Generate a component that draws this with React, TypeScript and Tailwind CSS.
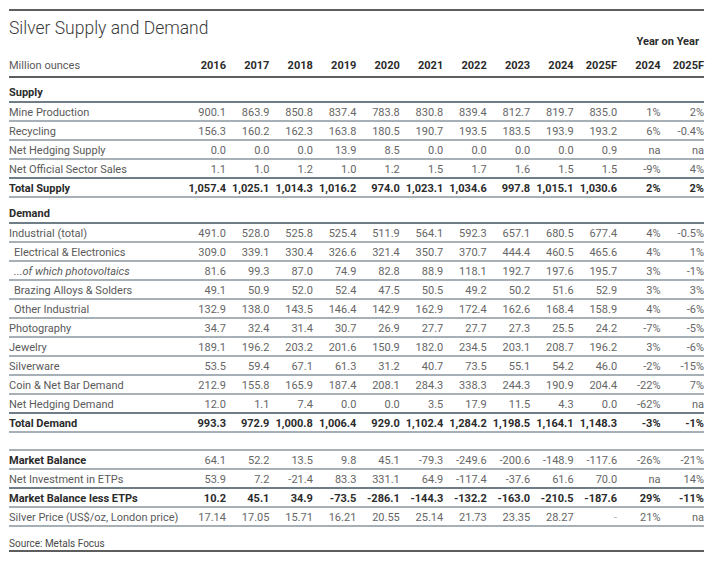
const years = ["2016", "2017", "2018", "2019", "2020", "2021", "2022", "2023", "2024", "2025F", "2024", "2025F"];

type Row = {
  label: string;
  values: string[];
  bold?: boolean;
  boldLabel?: boolean;
  indent?: boolean;
  italic?: boolean;
  dark?: boolean;
};

const supply: Row[] = [
  { label: "Mine Production", values: ["900.1", "863.9", "850.8", "837.4", "783.8", "830.8", "839.4", "812.7", "819.7", "835.0", "1%", "2%"] },
  { label: "Recycling", values: ["156.3", "160.2", "162.3", "163.8", "180.5", "190.7", "193.5", "183.5", "193.9", "193.2", "6%", "-0.4%"] },
  { label: "Net Hedging Supply", values: ["0.0", "0.0", "0.0", "13.9", "8.5", "0.0", "0.0", "0.0", "0.0", "0.9", "na", "na"] },
  { label: "Net Official Sector Sales", dark: true, values: ["1.1", "1.0", "1.2", "1.0", "1.2", "1.5", "1.7", "1.6", "1.5", "1.5", "-9%", "4%"] },
  { label: "Total Supply", bold: true, values: ["1,057.4", "1,025.1", "1,014.3", "1,016.2", "974.0", "1,023.1", "1,034.6", "997.8", "1,015.1", "1,030.6", "2%", "2%"] },
];

const demand: Row[] = [
  { label: "Industrial (total)", values: ["491.0", "528.0", "525.8", "525.4", "511.9", "564.1", "592.3", "657.1", "680.5", "677.4", "4%", "-0.5%"] },
  { label: "Electrical & Electronics", indent: true, values: ["309.0", "339.1", "330.4", "326.6", "321.4", "350.7", "370.7", "444.4", "460.5", "465.6", "4%", "1%"] },
  { label: "...of which photovoltaics", indent: true, italic: true, values: ["81.6", "99.3", "87.0", "74.9", "82.8", "88.9", "118.1", "192.7", "197.6", "195.7", "3%", "-1%"] },
  { label: "Brazing Alloys & Solders", indent: true, values: ["49.1", "50.9", "52.0", "52.4", "47.5", "50.5", "49.2", "50.2", "51.6", "52.9", "3%", "3%"] },
  { label: "Other Industrial", indent: true, values: ["132.9", "138.0", "143.5", "146.4", "142.9", "162.9", "172.4", "162.6", "168.4", "158.9", "4%", "-6%"] },
  { label: "Photography", values: ["34.7", "32.4", "31.4", "30.7", "26.9", "27.7", "27.7", "27.3", "25.5", "24.2", "-7%", "-5%"] },
  { label: "Jewelry", values: ["189.1", "196.2", "203.2", "201.6", "150.9", "182.0", "234.5", "203.1", "208.7", "196.2", "3%", "-6%"] },
  { label: "Silverware", values: ["53.5", "59.4", "67.1", "61.3", "31.2", "40.7", "73.5", "55.1", "54.2", "46.0", "-2%", "-15%"] },
  { label: "Coin & Net Bar Demand", values: ["212.9", "155.8", "165.9", "187.4", "208.1", "284.3", "338.3", "244.3", "190.9", "204.4", "-22%", "7%"] },
  { label: "Net Hedging Demand", dark: true, values: ["12.0", "1.1", "7.4", "0.0", "0.0", "3.5", "17.9", "11.5", "4.3", "0.0", "-62%", "na"] },
  { label: "Total Demand", bold: true, values: ["993.3", "972.9", "1,000.8", "1,006.4", "929.0", "1,102.4", "1,284.2", "1,198.5", "1,164.1", "1,148.3", "-3%", "-1%"] },
];

const balance: Row[] = [
  { label: "Market Balance", boldLabel: true, values: ["64.1", "52.2", "13.5", "9.8", "45.1", "-79.3", "-249.6", "-200.6", "-148.9", "-117.6", "-26%", "-21%"] },
  { label: "Net Investment in ETPs", dark: true, values: ["53.9", "7.2", "-21.4", "83.3", "331.1", "64.9", "-117.4", "-37.6", "61.6", "70.0", "na", "14%"] },
  { label: "Market Balance less ETPs", bold: true, values: ["10.2", "45.1", "34.9", "-73.5", "-286.1", "-144.3", "-132.2", "-163.0", "-210.5", "-187.6", "29%", "-11%"] },
  { label: "Silver Price (US$/oz, London price)", values: ["17.14", "17.05", "15.71", "16.21", "20.55", "25.14", "21.73", "23.35", "28.27", "-", "21%", "na"] },
];

const grid = "grid grid-cols-[173.5px_repeat(12,minmax(0,1fr))]";

function DataRow({ row }: { row: Row }) {
  const line = row.dark ? "border-[#6f7d86]" : "border-[#a7b0b6]";
  return (
    <div className={`${grid} h-[19px] items-center pt-[2px] border-b-2 ${line}`}>
      <div
        className={`${row.indent ? "pl-[5px]" : ""} ${row.italic ? "italic" : ""} ${
          row.bold || row.boldLabel ? "font-bold text-[#2b2b2b]" : "text-[#5a5a5a]"
        } whitespace-nowrap`}
      >
        {row.label}
      </div>
      {row.values.map((v, i) => (
        <div
          key={i}
          className={`text-right whitespace-nowrap ${
            row.bold ? "font-bold text-[#2b2b2b]" : v == "-" ? "text-[#aaaaaa]" : "text-[#666666]"
          }`}
        >
          {v}
        </div>
      ))}
    </div>
  );
}

const App = () => {
  return (
    <div className="w-[717px] h-[561px] bg-white pt-[9px] pl-[9px] font-['Roboto',sans-serif] text-[11px]">
      <div className="w-[695px] border-t-2 border-[#5e5e5e]">
        <div className="h-[22px] flex items-center pt-[14px]">
          <h1 className="text-[17.5px] font-light text-[#3a3a3a] leading-none">Silver Supply and Demand</h1>
        </div>
        <div className={`${grid} h-[18px] items-center pt-[1px]`}>
          <div className="col-start-12 col-span-2 text-right pr-[5px] font-bold text-[#2b2b2b]">Year on Year</div>
        </div>
        <div className={`${grid} h-[27px] items-center pt-[6px] border-b-2 border-[#5e5e5e]`}>
          <div className="text-[#5a5a5a]">Million ounces</div>
          {years.map((y, i) => (
            <div key={i} className="text-right font-bold text-[#2b2b2b]">
              {y}
            </div>
          ))}
        </div>

        <div className="h-[25px] flex items-center pt-[8px] border-b-2 border-[#6f7d86] font-bold text-[#2b2b2b]">Supply</div>
        {supply.map((r) => (
          <DataRow key={r.label} row={r} />
        ))}

        <div className="h-[26px] flex items-center pt-[8px] border-b-2 border-[#6f7d86] font-bold text-[#2b2b2b]">Demand</div>
        {demand.map((r) => (
          <DataRow key={r.label} row={r} />
        ))}

        <div className="h-[16px]"></div>
        <div className="border-t-2 border-[#a7b0b6]">
          {balance.map((r) => (
            <DataRow key={r.label} row={r} />
          ))}
        </div>

        <div className="h-[25px] flex items-center pt-[9px] border-b-2 border-[#5e5e5e] text-[10px] text-[#4a4a4a]">
          Source: Metals Focus
        </div>
      </div>
    </div>
  );
};

export default App;
